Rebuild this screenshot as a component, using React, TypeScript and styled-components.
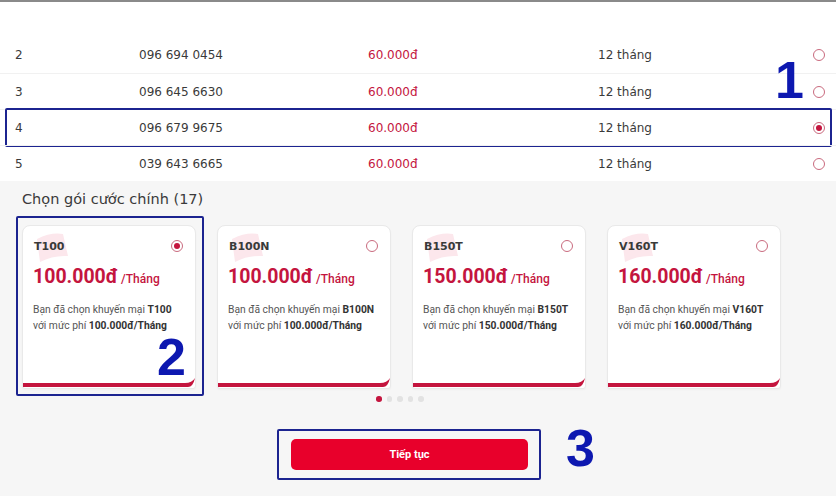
import React from 'react';
import styled, { createGlobalStyle } from 'styled-components';

const GlobalStyle = createGlobalStyle`
  body {
    margin: 0;
    background: #f6f6f6;
    font-family: "DejaVu Sans", Verdana, sans-serif;
  }
  #root {
    width: 836px;
    height: 496px;
    overflow: hidden;
  }
`;

const RED = '#c4153e';
const BLUE = '#1c2490';

const Page = styled.div`
  width: 836px;
  display: flex;
  flex-direction: column;
`;

const Table = styled.div`
  background: #fff;
  border-top: 2px solid #8a8a8a;
`;

const Spacer = styled.div`
  height: 35px;
`;

const Row = styled.div<{ $marked?: boolean }>`
  position: relative;
  height: 36px;
  box-sizing: border-box;
  display: grid;
  grid-template-columns: 124px 229px 230px 1fr 12px;
  align-items: center;
  padding: 0 11px 0 15px;
  font-size: 12px;
  color: #3a3a3a;

  & + & {
    border-top: 1px solid #f1f1f1;
  }

  ${p => p.$marked && `
    &::after {
      content: '';
      position: absolute;
      top: -2px;
      bottom: -2px;
      left: 5px;
      right: 4px;
      border: 2px solid ${BLUE};
      border-radius: 2px;
      pointer-events: none;
    }
  `}
`;

const Price = styled.span`
  color: ${RED};
`;

const Radio = styled.span<{ $on?: boolean }>`
  width: 12px;
  height: 12px;
  box-sizing: border-box;
  border-radius: 50%;
  border: 1px solid #c96a7e;
  display: flex;
  align-items: center;
  justify-content: center;
  background: #fff;

  &::before {
    content: '';
    width: 6px;
    height: 6px;
    border-radius: 50%;
    background: ${p => (p.$on ? RED : 'transparent')};
  }
`;

const Label = styled.span`
  position: absolute;
  font-family: "Liberation Sans", Arial, sans-serif;
  font-weight: 700;
  font-size: 52px;
  line-height: 0.75;
  color: #0d18b0;
  pointer-events: none;
`;

const Section = styled.div`
  padding: 8px 0 0 22px;
`;

const Title = styled.div`
  font-size: 14.5px;
  line-height: 20px;
  color: #3a3a3a;
  margin-bottom: 16px;
`;

const CardList = styled.div`
  display: flex;
  gap: 21px;
`;

const Card = styled.div<{ $marked?: boolean }>`
  position: relative;
  width: 174px;
  height: 164px;
  box-sizing: border-box;
  background: #fff;
  border: 1px solid #e9e9e9;
  border-radius: 8px 8px 3px 3px;
  display: flex;
  flex-direction: column;
  padding: 14px 0 1px;
  box-shadow: 0 1px 2px rgba(0, 0, 0, 0.03);

  ${p => p.$marked && `
    &::after {
      content: '';
      position: absolute;
      top: -10px;
      bottom: -8px;
      left: -7px;
      right: -9px;
      border: 2px solid ${BLUE};
      border-radius: 2px;
      pointer-events: none;
    }
  `}
`;

const Ribbon = styled.svg`
  position: absolute;
  left: 12px;
  top: 5px;
`;

const CardHead = styled.div`
  position: relative;
  display: flex;
  justify-content: space-between;
  align-items: center;
  padding: 0 12px 0 11px;
  height: 12px;
`;

const Code = styled.span`
  font-weight: 700;
  font-size: 11px;
  color: #3a3a3a;
`;

const Amount = styled.div`
  margin: 13px 0 0 10px;
  font-family: Roboto, "Noto Sans", sans-serif;
  font-weight: 700;
  font-size: 19.5px;
  line-height: 24px;
  color: ${RED};

  small {
    font-size: 12px;
    font-weight: 500;
    margin-left: 3px;
  }
`;

const Desc = styled.p`
  margin: 11px 0 0 10px;
  font-family: Roboto, "Noto Sans", sans-serif;
  font-size: 10.3px;
  line-height: 16px;
  color: #555;

  b {
    color: #333;
  }
`;

const Bar = styled.div`
  margin-top: auto;
  display: flex;
  align-items: flex-end;
`;

const BarLine = styled.div`
  flex: 1;
  height: 4px;
  background: ${RED};
`;

const Dots = styled.div`
  display: flex;
  justify-content: center;
  gap: 5px;
  margin: 7px 0 0;
  padding-right: 36px;
`;

const Dot = styled.span<{ $on?: boolean }>`
  width: 5.5px;
  height: 5.5px;
  border-radius: 50%;
  background: ${p => (p.$on ? RED : '#e2e2e2')};
`;

const Footer = styled.div`
  display: flex;
  justify-content: center;
  padding: 37px 17px 0 0;
`;

const ButtonWrap = styled.div`
  position: relative;

  &::after {
    content: '';
    position: absolute;
    top: -10px;
    bottom: -10px;
    left: -14px;
    right: -13px;
    border: 2px solid ${BLUE};
    border-radius: 2px;
    pointer-events: none;
  }
`;

const Button = styled.button`
  width: 237px;
  height: 31px;
  border: none;
  border-radius: 5px;
  background: #e8002b;
  color: #fff;
  font-family: Roboto, "Noto Sans", sans-serif;
  font-weight: 700;
  font-size: 11px;
  cursor: pointer;
`;

const rows = [
  { n: 2, phone: '096 694 0454' },
  { n: 3, phone: '096 645 6630' },
  { n: 4, phone: '096 679 9675', on: true },
  { n: 5, phone: '039 643 6665' },
];

const plans = [
  { code: 'T100', price: '100.000đ', on: true },
  { code: 'B100N', price: '100.000đ' },
  { code: 'B150T', price: '150.000đ' },
  { code: 'V160T', price: '160.000đ' },
];

function PlanCard({ code, price, on }: { code: string; price: string; on?: boolean }) {
  return (
    <Card $marked={on}>
      <Ribbon width="36" height="32" viewBox="0 0 36 32">
        <path d="M2 8 Q16 1 28 3 L33 25 Q18 24 5 31 Z" fill="#fce7ec" />
      </Ribbon>
      <CardHead>
        <Code>{code}</Code>
        <Radio $on={on} />
      </CardHead>
      <Amount>
        {price}
        <small>/Tháng</small>
      </Amount>
      <Desc>
        Bạn đã chọn khuyến mại <b>{code}</b>
        <br />
        với mức phí <b>{price}/Tháng</b>
      </Desc>
      <Bar>
        <BarLine />
        <svg width="10" height="9" viewBox="0 0 10 9">
          <path d="M0 5 L0 9 L3 9 Q8 9 10 0 Q7 5 0 5 Z" fill={RED} />
        </svg>
      </Bar>
      {on && <Label style={{ right: 9, bottom: 11 }}>2</Label>}
    </Card>
  );
}

export default function App() {
  return (
    <Page>
      <GlobalStyle />
      <Table>
        <Spacer />
        {rows.map(r => (
          <Row key={r.n} $marked={r.on}>
            <span>{r.n}</span>
            <span>{r.phone}</span>
            <Price>60.000đ</Price>
            <span>12 tháng</span>
            <Radio $on={r.on} />
            {r.n === 3 && <Label style={{ left: 775, top: -13 }}>1</Label>}
          </Row>
        ))}
      </Table>
      <Section>
        <Title>Chọn gói cước chính (17)</Title>
        <CardList>
          {plans.map(p => (
            <PlanCard key={p.code} {...p} />
          ))}
        </CardList>
      </Section>
      <Dots>
        {[0, 1, 2, 3, 4].map(i => (
          <Dot key={i} $on={i === 0} />
        ))}
      </Dots>
      <Footer>
        <ButtonWrap>
          <Button>Tiếp tục</Button>
          <Label style={{ left: 275, top: -10 }}>3</Label>
        </ButtonWrap>
      </Footer>
    </Page>
  );
}
